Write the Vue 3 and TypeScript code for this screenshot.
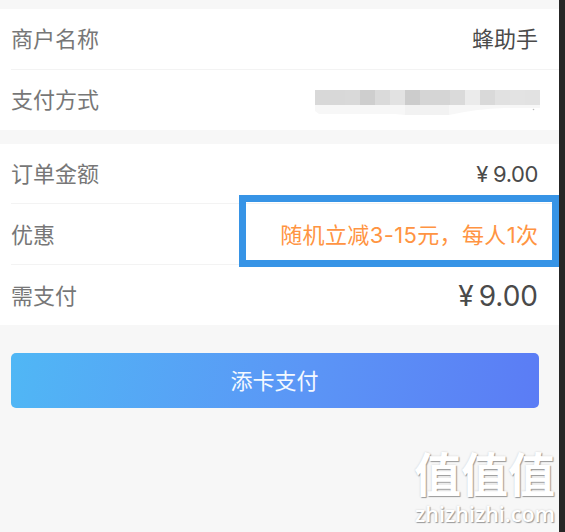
<script setup lang="ts">
interface Row {
  label: string
  value?: string
  kind?: 'amount' | 'offer' | 'total' | 'masked'
}

const merchant: Row[] = [
  { label: '商户名称', value: '蜂助手' },
  { label: '支付方式', kind: 'masked' },
]

const order: Row[] = [
  { label: '订单金额', value: '9.00', kind: 'amount' },
  { label: '优惠', value: '随机立减3-15元，每人1次', kind: 'offer' },
  { label: '需支付', value: '9.00', kind: 'total' },
]

const tiles: string[] = [
  '#d8d8d8', '#d8d8d8', '#d9d9d9', '#cecece', '#dadada',
  '#e2e2e2', '#cccccc', '#d5d5d5', '#d5d5d5', '#dadada',
  '#ebebeb', '#d9d9d9', '#e1e1e1', '#e3e3e3', '#e2e2e2',
]
</script>

<template>
  <div class="screen">
    <main class="page">
      <section class="group merchant">
        <div v-for="row in merchant" :key="row.label" class="row">
          <span class="label">{{ row.label }}</span>
          <div v-if="row.kind === 'masked'" class="mask">
            <div class="tiles">
              <i v-for="(c, i) in tiles" :key="i" :style="{ background: c }"></i>
            </div>
            <svg class="smudge" width="225" height="12" viewBox="0 0 225 12">
              <path d="M0 0H225V3L190 3Q160 4 134 10H90L80 9H4L0 6Z" fill="#f7f7f7" />
              <path d="M90 0H134V10H90Z" fill="#f2f2f2" />
              <circle cx="218.500" cy="4.500" r=".8" fill="#bbb" />
            </svg>
          </div>
          <span v-else class="value">{{ row.value }}</span>
        </div>
      </section>

      <section class="group order">
        <div v-for="row in order" :key="row.label" class="row">
          <span class="label">{{ row.label }}</span>
          <span class="value" :class="row.kind">
            <span v-if="row.kind !== 'offer'" class="yen">¥</span>{{ row.value }}
          </span>
          <div v-if="row.kind === 'offer'" class="highlight"></div>
        </div>
      </section>

      <button class="pay" type="button">添卡支付</button>

      <div class="watermark">
        <div class="brand">值值值</div>
        <div class="site">zhizhizhi.com</div>
      </div>
    </main>
    <div class="edge"></div>
  </div>
</template>

<style>
body {
  margin: 0;
  overflow: hidden;
}
</style>

<style scoped>
.screen {
  display: flex;
  width: 565px;
  height: 532px;
  font-family: Inter, 'Noto Sans CJK SC', sans-serif;
  font-size: 22px;
}
.page {
  position: relative;
  box-sizing: border-box;
  width: 559px;
  padding-top: 9px;
  background: #f7f7f7;
}
.edge {
  width: 6px;
  background: #262626;
}
.group {
  background: #fff;
}
.order {
  margin-top: 14px;
}
.row {
  position: relative;
  display: flex;
  box-sizing: border-box;
  height: 61px;
  margin-left: 11px;
  padding-right: 21px;
  align-items: center;
  justify-content: space-between;
  border-bottom: 1px solid #f3f3f3;
  line-height: 32px;
  white-space: nowrap;
}
.row:last-child {
  height: 60px;
  border-bottom: 0;
}
.order .row:first-child {
  height: 60px;
}
.order .row:nth-child(n + 2) {
  padding-top: 2px;
}
.label {
  color: #777;
}
.value {
  color: #4a4a4a;
}
.yen {
  margin-right: 5px;
}
.amount {
  letter-spacing: -0.4px;
}
.total {
  font-size: 28px;
}
.offer {
  margin-right: -0.4px;
  color: #ff9442;
  letter-spacing: 0.37px;
}
.highlight {
  position: absolute;
  top: -9px;
  right: 0;
  box-sizing: border-box;
  width: 320px;
  height: 72px;
  border: 7px solid #3794e6;
}
.mask {
  width: 225px;
  height: 27px;
  margin-top: 6px;
  margin-right: -2px;
}
.tiles {
  display: flex;
  height: 15px;
}
.tiles i {
  width: 15px;
}
.smudge {
  display: block;
}
.pay {
  display: block;
  width: 528px;
  height: 55px;
  margin: 28px 0 0 10.500px;
  padding: 2px 0 0;
  border: 0;
  border-radius: 5px;
  background: linear-gradient(100deg, #50b7f5, #5b96f6 55%, #5b7cf5);
  color: #f4f9ff;
  font: inherit;
  line-height: 53px;
}
.watermark {
  position: absolute;
  top: 445px;
  left: 414px;
  color: #fff;
  white-space: nowrap;
  text-shadow: 1px 1px 1px #999, 0 0 2px #ccc;
}
.brand {
  height: 54px;
  font-family: 'Noto Sans CJK SC', sans-serif;
  font-size: 47px;
  font-weight: 700;
  line-height: 53px;
}
.site {
  padding-left: 1px;
  font-family: 'Open Sans', sans-serif;
  font-size: 21.500px;
  font-weight: 600;
  line-height: 30px;
}
</style>
